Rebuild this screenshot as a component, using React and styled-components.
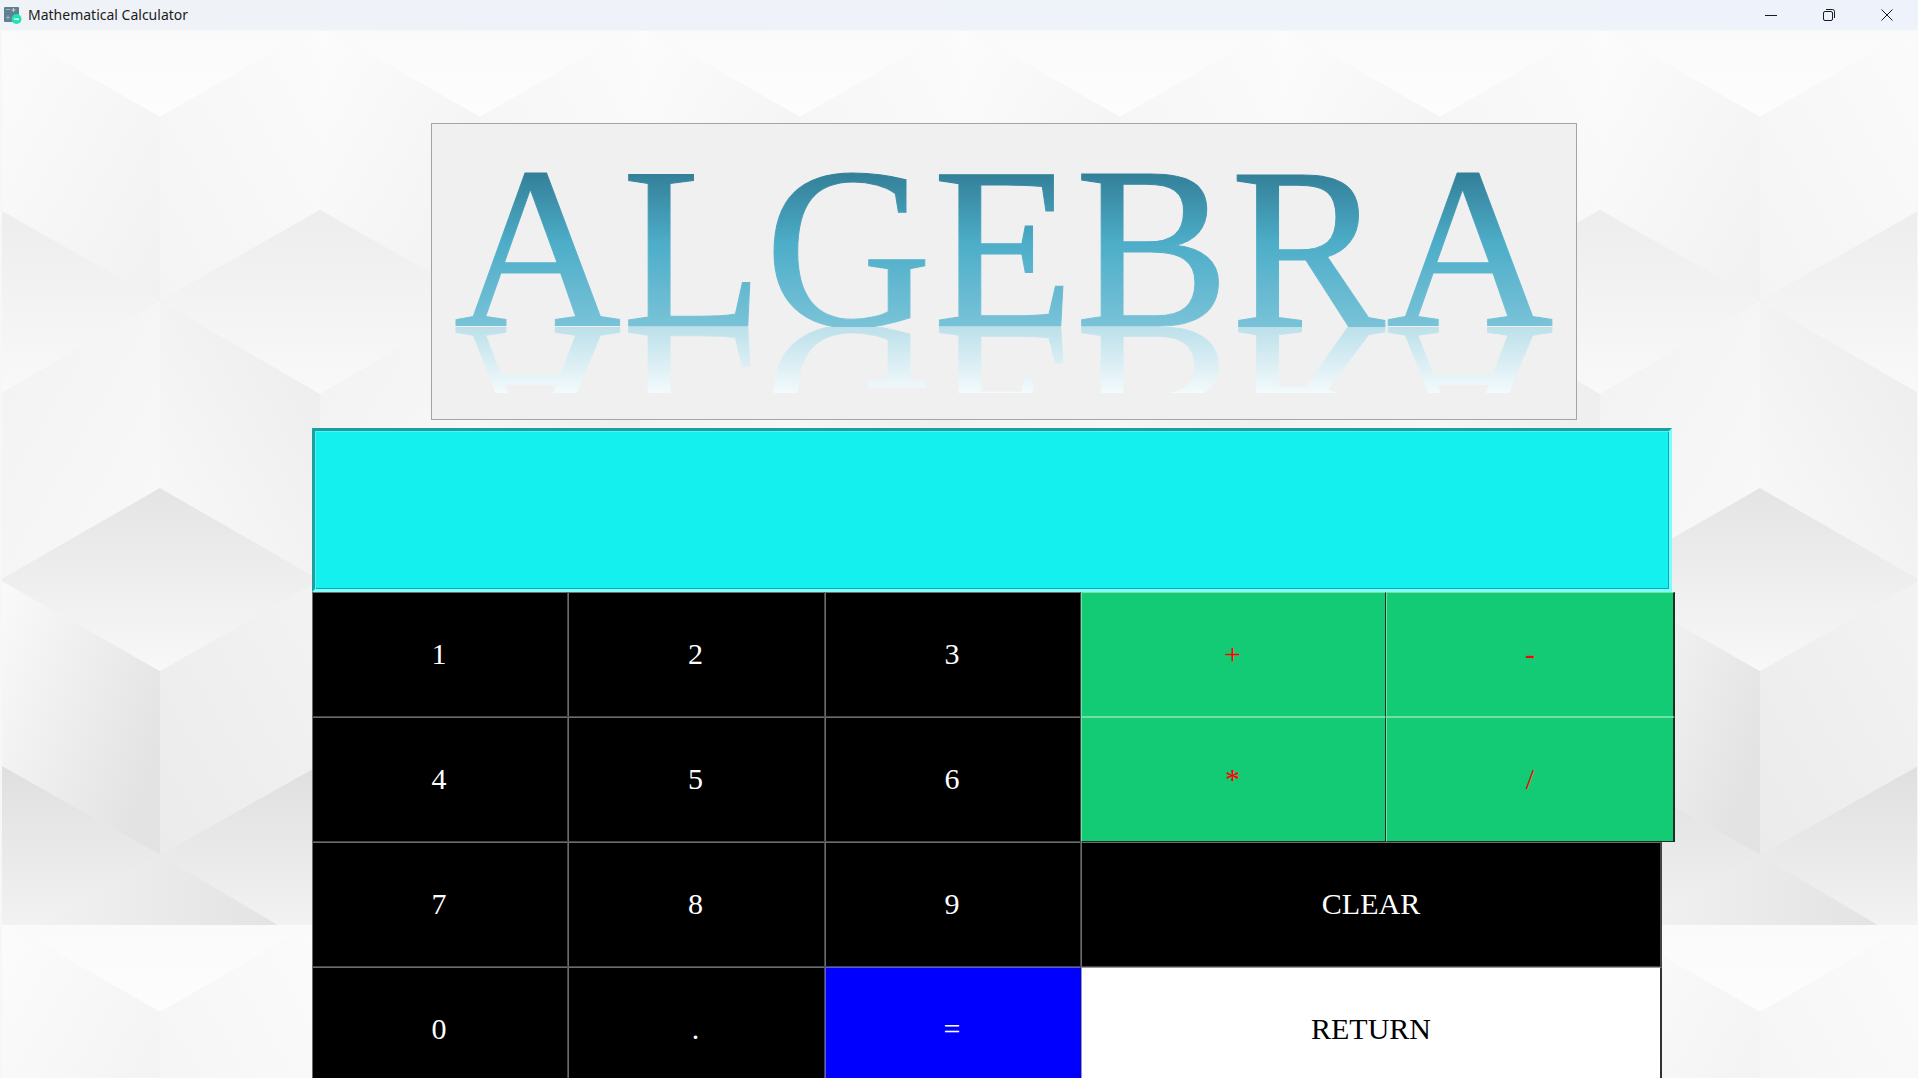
import React from "react"
import styled, { createGlobalStyle } from "styled-components"

// wall texture: isometric cubes, one tile of 1920x895 repeated down the page
// each shade: from colour, to colour, gradient vector in the face's box
const shades = {
  aLeft: ["#fcfcfc", "#f1f1f1", 0, 0, 1, 1],
  aRight: ["#f4f4f4", "#fbfbfb", 0, 1, 1, 0],
  bTop: ["#ededed", "#f9f9f9", 0, 0, 0, 1],
  bLeft: ["#f9f9f9", "#ececec", 0, 1, 1, 0],
  bRight: ["#f2f2f2", "#f9f9f9", 0, 0, 1, 1],
  cTop: ["#e4e4e4", "#f8f8f8", 0, 0, 0, 1],
  cLeft: ["#fafafa", "#e3e3e3", 0, 0, 1, 0.6],
  cRight: ["#ebebeb", "#f3f3f3", 0, 1, 1, 0],
  dTop: ["#dfdfdf", "#f5f5f5", 0, 0, 0, 1],
  tip: ["#f1f1f1", "#e3e3e3", 0, 0, 1, 0],
  band: ["#fafafa", "#fdfdfd", 0, 0, 0, 1],
}

// points are given in page pixels, the tile starts under the 30px title bar
const poly = (fill, pts) =>
  `<polygon fill="url(#${fill})" points="${pts.map(([x, y]) => `${x},${y - 30}`).join(" ")}"/>`

const buildTile = () => {
  const defs = Object.entries(shades)
    .map(
      ([id, [a, b, x1, y1, x2, y2]]) =>
        `<linearGradient id="${id}" x1="${x1}" y1="${y1}" x2="${x2}" y2="${y2}"><stop offset="0" stop-color="${a}"/><stop offset="1" stop-color="${b}"/></linearGradient>`
    )
    .join("")
  let out = ""
  for (let c = 0; c <= 1920; c += 320) {
    const o = c + 160
    out += poly("band", [[o - 160, 30], [o + 160, 30], [o + 160, 26], [o, 117], [o - 160, 26]])
    out += poly("aLeft", [[o - 160, 26], [o, 117], [o, 301], [o - 160, 210]])
    out += poly("aRight", [[o, 117], [o + 160, 26], [o + 160, 210], [o, 301]])
    out += poly("bLeft", [[c - 160, 301], [c, 394], [c, 580], [c - 160, 488]])
    out += poly("bRight", [[c, 394], [c + 160, 301], [c + 160, 488], [c, 580]])
    out += poly("bTop", [[c, 210], [c + 160, 301], [c, 394], [c - 160, 301]])
    out += poly("cLeft", [[o - 160, 580], [o, 671], [o, 855], [o - 160, 765]])
    out += poly("cRight", [[o, 671], [o + 160, 580], [o + 160, 765], [o, 855]])
    out += poly("cTop", [[o, 488], [o + 160, 580], [o, 671], [o - 160, 580]])
    out += poly("dTop", [[c, 765], [c + 160, 855], [c, 950], [c - 160, 855]])
    out += poly("tip", [[o, 855], [o - 118, 925], [o + 118, 925]])
  }
  const svg = `<svg xmlns="http://www.w3.org/2000/svg" width="1920" height="895" viewBox="0 0 1920 895"><defs>${defs}</defs><rect width="1920" height="895" fill="#f1f1f1"/>${out}</svg>`
  return `data:image/svg+xml,${encodeURIComponent(svg)}`
}

const GlobalStyle = createGlobalStyle`
  html, body {
    margin: 0;
    height: 100%;
    overflow: hidden;
    font-family: "Liberation Serif", "Times New Roman", serif;
  }
  * { box-sizing: border-box; }
`

const Window = styled.div`
  width: 1918px;
  height: 1078px;
  display: flex;
  flex-direction: column;
  overflow: hidden;
`

const TitleBar = styled.div`
  height: 30px;
  flex: none;
  display: flex;
  align-items: center;
  padding-left: 4px;
  background: linear-gradient(90deg, #eff3f8, #eef2fa);
`

const AppName = styled.span`
  margin-left: 6px;
  padding-bottom: 2px;
  font-family: "Noto Sans", "Open Sans", sans-serif;
  font-size: 14px;
  color: #1b1b1b;
`

const WindowButtons = styled.div`
  margin-left: auto;
  margin-right: 2px;
  display: flex;
`

const WindowButton = styled.div`
  width: 58px;
  height: 30px;
  display: flex;
  align-items: center;
  justify-content: center;
`

const Main = styled.div`
  flex: 1;
  min-height: 0;
  display: flex;
  flex-direction: column;
  align-items: flex-start;
  padding: 92px 0 0 310px;
  border: solid #f7f7f7;
  border-width: 1px 1px 0 2px;
  background-image: url("${buildTile()}");
  background-origin: border-box;
  background-size: 1920px 895px;
  background-repeat: repeat-y;
`

const LogoBox = styled.div`
  flex: none;
  width: 1146px;
  height: 297px;
  margin: 0 0 8px 119px;
  padding-top: 39px;
  border: 1px solid #a4a4a4;
  background: #f0f0f0;
  display: flex;
  flex-direction: column;
  align-items: center;
`

const Word = styled.div`
  font-family: "Liberation Serif", "Times New Roman", serif;
  font-size: 232px;
  line-height: 170px;
  height: 170px;
  letter-spacing: 0.7px;
  white-space: nowrap;
  color: transparent;
  -webkit-text-stroke: 1px transparent;
  background: linear-gradient(180deg, #337f98 0, #337f98 10px, #4dadc8 80px, #79c3d8 164px, #79c3d8 170px);
  -webkit-background-clip: text;
  background-clip: text;
`

const Reflection = styled.div`
  height: 66px;
  margin-top: -6px;
  overflow: hidden;
  flex: none;
`

const MirrorWord = styled(Word)`
  background: linear-gradient(180deg, #f3fafc 0, #f3fafc 90px, #bce0ea 163.5px, #bce0ea 170px);
  -webkit-background-clip: text;
  background-clip: text;
  transform-origin: 50% 163.5px;
  transform: translateY(-163.5px) scaleY(-0.9);
`

const Display = styled.input`
  flex: none;
  display: block;
  width: 1360px;
  height: 164px;
  padding: 0 8px;
  outline: none;
  border: 3px solid;
  border-color: #17a2a2 #7efcfc #7efcfc #17a2a2;
  box-shadow: inset 1px 1px 0 #5ceeee, inset -1px -1px 0 #12a8a8;
  background: #14f0ee;
  font: 30px "Liberation Serif", serif;
`

const Keypad = styled.div`
  flex: none;
  display: grid;
  grid-template-columns: 256px 257px 256px 305px 276px 13px;
  grid-auto-rows: 125px;
`

const palette = {
  dark: { bg: "#000", fg: "#fff", hi: "#6c6c6c", lo: "#454545" },
  op: { bg: "#13cb74", fg: "#f00", hi: "#72dfa8", lo: "#1c2e25" },
  equal: { bg: "#00f", fg: "#fff", hi: "#5a5ae6", lo: "#00f" },
  light: { bg: "#fff", fg: "#000", hi: "#9a9a9a", lo: "#333" },
}

const Key = styled.button`
  grid-column: span ${(p) => p.$span || 1};
  border: 1px solid;
  border-color: ${(p) => palette[p.$kind].hi};
  border-right-color: ${(p) => palette[p.$kind].lo};
  border-bottom-color: ${(p) => (p.$seam ? palette[p.$kind].hi : palette[p.$kind].lo)};
  border-right-width: ${(p) => (p.$edge ? "2px" : "1px")};
  background: ${(p) => palette[p.$kind].bg};
  color: ${(p) => palette[p.$kind].fg};
  font: 30px "Liberation Serif", "Times New Roman", serif;
  padding: 0 ${(p) => (p.$edge ? "0" : "2px")} 2px 0;
`

const Gap = styled.div``

const AppIcon = () => (
  <svg width="18" height="18" viewBox="0 0 18 18">
    <rect x="0" y="1" width="15" height="15" rx="1" fill="#5f808f" />
    <rect x="2" y="3" width="4" height="1" fill="#9fb4bd" />
    <rect x="9" y="2" width="1" height="4" fill="#c5d3d8" />
    <rect x="7.5" y="3.5" width="4" height="1" fill="#c5d3d8" />
    <rect x="2" y="11" width="4" height="1" fill="#9fb4bd" />
    <rect x="3.5" y="9.5" width="1" height="4" fill="#9fb4bd" />
    <circle cx="12.5" cy="13" r="5" fill="#1fe3b1" />
    <rect x="10" y="12.4" width="5" height="1.4" fill="#e8fff8" />
  </svg>
)

const MinimizeIcon = () => (
  <svg width="12" height="12" viewBox="0 0 12 12">
    <path d="M0 6.5h12" stroke="#1b1b1b" strokeWidth="1" fill="none" />
  </svg>
)

const RestoreIcon = () => (
  <svg width="12" height="12" viewBox="0 0 12 12">
    <rect x="0.5" y="2.5" width="9" height="9" rx="1.5" stroke="#1b1b1b" fill="none" />
    <path d="M3 0.5h6.5a2 2 0 0 1 2 2V9" stroke="#1b1b1b" fill="none" />
  </svg>
)

const CloseIcon = () => (
  <svg width="12" height="12" viewBox="0 0 12 12">
    <path d="M0.5 0.5l11 11M11.5 0.5l-11 11" stroke="#1b1b1b" strokeWidth="1" fill="none" />
  </svg>
)

const App = () => {
  return (
    <Window>
      <GlobalStyle />
      <TitleBar>
        <AppIcon />
        <AppName>Mathematical Calculator</AppName>
        <WindowButtons>
          <WindowButton><MinimizeIcon /></WindowButton>
          <WindowButton><RestoreIcon /></WindowButton>
          <WindowButton><CloseIcon /></WindowButton>
        </WindowButtons>
      </TitleBar>
      <Main>
        <LogoBox>
          <Word>ALGEBRA</Word>
          <Reflection>
            <MirrorWord aria-hidden="true">ALGEBRA</MirrorWord>
          </Reflection>
        </LogoBox>
        <Display readOnly />
        <Keypad>
          <Key $kind="dark">1</Key>
          <Key $kind="dark">2</Key>
          <Key $kind="dark">3</Key>
          <Key $kind="op" $seam>+</Key>
          <Key $kind="op" $seam $span={2} $edge>-</Key>

          <Key $kind="dark">4</Key>
          <Key $kind="dark">5</Key>
          <Key $kind="dark">6</Key>
          <Key $kind="op">*</Key>
          <Key $kind="op" $span={2} $edge>/</Key>

          <Key $kind="dark">7</Key>
          <Key $kind="dark">8</Key>
          <Key $kind="dark">9</Key>
          <Key $kind="dark" $span={2} $edge>CLEAR</Key>
          <Gap />

          <Key $kind="dark">0</Key>
          <Key $kind="dark">.</Key>
          <Key $kind="equal">=</Key>
          <Key $kind="light" $span={2} $edge>RETURN</Key>
          <Gap />
        </Keypad>
      </Main>
    </Window>
  )
}

export default App
